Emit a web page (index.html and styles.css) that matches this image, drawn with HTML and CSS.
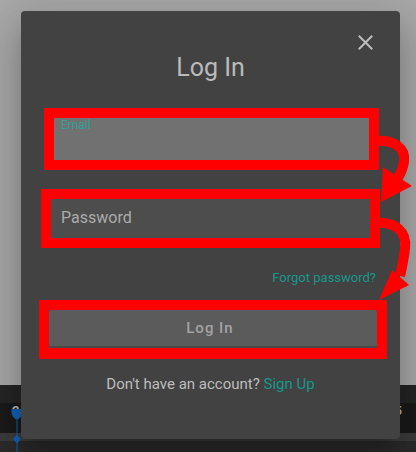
FILE: index.html
```html
<!DOCTYPE html>
<html lang="en">
<head>
<meta charset="utf-8">
<title>Log In</title>
<link rel="stylesheet" href="styles.css">
</head>
<body>
<div class="app">
  <div class="app-top"></div>
  <div class="band band-a"></div>
  <div class="band band-b">
    <span class="tick tick-left">2</span>
    <span class="tick tick-right">5</span>
  </div>
  <div class="band band-c"></div>
  <div class="band band-d"></div>
  <svg class="marker" width="12" height="44" viewBox="0 0 12 44">
    <path d="M0.5 0 H11.5 V3 C11.5 7 8.5 9.5 6.5 10.5 V26 L10 30 L6.5 34 V44 H5.5 V34 L2 30 L5.5 26 V10.5 C3.5 9.5 0.5 7 0.5 3 Z" fill="#1461b4"/>
  </svg>
</div>

<div class="dialog">
  <div class="dlg-head">
    <button class="close" aria-label="Close">
      <svg width="15" height="15" viewBox="0 0 15 15"><path d="M1.5 1.5 L13.5 13.5 M13.5 1.5 L1.5 13.5" stroke="#bdbdbd" stroke-width="2" stroke-linecap="square"/></svg>
    </button>
  </div>
  <h2 class="title">Log In</h2>

  <div class="mark mark-email">
    <div class="field field-filled"><span class="label">Email</span></div>
  </div>

  <div class="mark mark-pass">
    <div class="field field-pass"><span class="placeholder">Password</span></div>
  </div>

  <div class="forgot-row"><a class="link forgot">Forgot password?</a></div>

  <div class="mark mark-btn">
    <div class="btn">Log In</div>
  </div>

  <p class="signup">Don't have an account? <a class="link">Sign Up</a></p>
</div>

<svg class="arrows" width="416" height="452" viewBox="0 0 416 452">
  <path d="M374 141 C394 139 406 148 404 162 C403 168 401 173 398 178" fill="none" stroke="#ff0000" stroke-width="10"/>
  <polygon points="383,167 412,186 381,202" fill="#ff0000"/>
  <path d="M374 223 C396 221 407 232 405 248 C404 259 402 267 400 276" fill="none" stroke="#ff0000" stroke-width="10"/>
  <polygon points="392,270 409,285 379,300" fill="#ff0000"/>
</svg>
</body>
</html>
```

FILE: styles.css
```css
* { box-sizing: border-box; }

html, body {
  margin: 0;
  padding: 0;
  width: 416px;
  height: 452px;
  overflow: hidden;
  font-family: Roboto, "Noto Sans", Arial, sans-serif;
}

body { position: relative; background: #a8a8a8; }

.app {
  position: relative;
  display: flex;
  flex-direction: column;
  height: 452px;
}

.app-top { height: 385px; background: #a8a8a8; }
.band-a { height: 18px; background: #252525; }
.band-b {
  height: 30px;
  background: #1a1a1a;
  display: flex;
  justify-content: space-between;
  align-items: flex-start;
  padding: 0 14px 0 12px;
}
.band-c { height: 8px; background: #3c3c3c; }
.band-d { flex: 1; background: #2b2b2b; }

.tick {
  font-size: 13px;
  font-weight: 700;
  color: #b8b8b8;
  line-height: 14px;
  margin-top: 1px;
}

.marker {
  position: absolute;
  left: 11px;
  top: 409px;
}

.dialog {
  position: absolute;
  left: 21px;
  top: 11px;
  width: 379px;
  height: 428px;
  background: #424242;
  border-radius: 4px;
  box-shadow: 0 11px 15px -7px rgba(0,0,0,0.2), 0 24px 38px 3px rgba(0,0,0,0.14), 0 9px 46px 8px rgba(0,0,0,0.12);
  display: flex;
  flex-direction: column;
}

.dlg-head {
  margin-top: 20px;
  height: 23px;
  padding-right: 23px;
  display: flex;
  justify-content: flex-end;
}

.close {
  width: 24px;
  height: 23px;
  padding: 0;
  border: 0;
  background: transparent;
  display: flex;
  align-items: center;
  justify-content: center;
}

.title {
  margin: 0;
  font-size: 25px;
  font-weight: 400;
  line-height: 28px;
  text-align: center;
  color: #bababa;
}

.mark {
  border: 10px solid #ff0000;
}

.mark-email {
  margin-top: 26px;
  margin-left: 23px;
  width: 335px;
  height: 62px;
}

.mark-pass {
  margin-top: 19px;
  margin-left: 20px;
  width: 339px;
  height: 59px;
}

.mark-btn {
  margin-top: 15px;
  margin-left: 18px;
  width: 348px;
  height: 59px;
  border-bottom-width: 11px;
}

.field { height: 100%; }

.field-filled {
  background: #717171;
  padding-left: 7px;
}

.label {
  display: block;
  font-size: 12px;
  line-height: 14px;
  color: #2fa397;
}

.field-pass {
  background: #4d4d4d;
  padding: 9px 0 0 10px;
}

.placeholder {
  display: block;
  font-size: 16px;
  line-height: 19px;
  color: #ababab;
}

.forgot-row {
  margin-top: 22px;
  padding-right: 24px;
  display: flex;
  justify-content: flex-end;
}

.link { color: #17978a; cursor: pointer; }

.forgot {
  font-size: 13px;
  line-height: 15px;
}

.btn {
  height: 100%;
  background: #5b5b5b;
  box-shadow: inset 0 -2px 0 #4a4a4a;
  border-radius: 2px;
  padding: 9px 6px 0 0;
  text-align: center;
  font-size: 15px;
  font-weight: 500;
  letter-spacing: 1px;
  line-height: 19px;
  color: #a3a3a3;
}

.signup {
  margin: 16px 0 0;
  text-align: center;
  font-size: 15px;
  line-height: 18px;
  color: #bdbdbd;
}

.arrows {
  position: absolute;
  left: 0;
  top: 0;
  pointer-events: none;
}
```
